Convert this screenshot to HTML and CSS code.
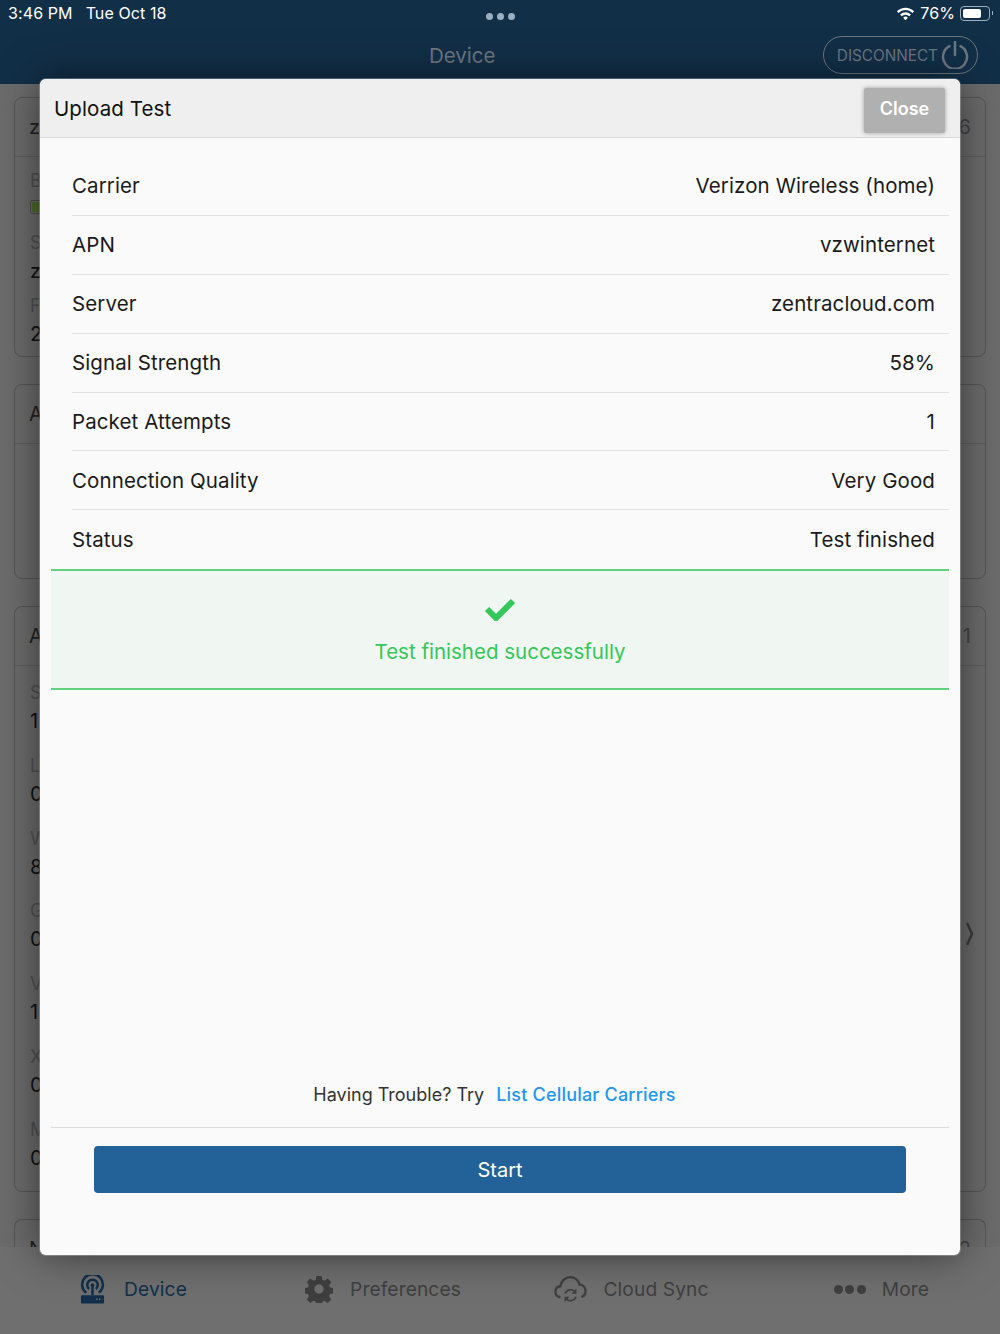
FILE: index.html
```html
<!DOCTYPE html>
<html lang="en">
  <head>
    <meta charset="UTF-8" />
    <meta name="viewport" content="width=device-width, initial-scale=1.0" />
    <title>Upload Test</title>
    <link rel="stylesheet" href="styles.css">
  </head>
  <body>
    <div class="app">
      <!-- Header -->
      <header class="topBar">
        <div class="statusBar">
          <div class="statusLeft">
            <span>3:46 PM</span>
            <span>Tue Oct 18</span>
          </div>
          <div class="statusDots"><i></i><i></i><i></i></div>
          <div class="statusRight">
            <svg class="wifiIcon" viewBox="0 0 20 15">
              <path d="M1 5.2a12.8 12.8 0 0 1 18 0l-1.6 1.7a10.5 10.5 0 0 0-14.8 0z" />
              <path d="M4.3 8.6a8.2 8.2 0 0 1 11.4 0l-1.7 1.7a5.8 5.8 0 0 0-8 0z" />
              <path d="M7.5 11.9a3.6 3.6 0 0 1 5 0L10 14.5z" />
            </svg>
            <span>76%</span>
            <div class="battery"><div class="batteryLevel"></div></div>
            <div class="batteryTip"></div>
          </div>
        </div>
        <div class="navBar">
          <div class="navTitle">Device</div>
          <div class="disconnect">
            <span>DISCONNECT</span>
            <svg class="powerIcon" viewBox="0 0 28 28">
              <path d="M8.5 5.2a12 12 0 1 0 11 0" />
              <path d="M14 1v13" />
            </svg>
          </div>
        </div>
      </header>

      <!-- Cards behind the dialog -->
      <main class="cards">
        <section class="card cardOne">
          <div class="cardHead"><span>z</span><span>6</span></div>
          <div class="cardBody">
            <div class="field">
              <div class="fieldLabel">B</div>
              <div class="batteryBox"><div></div></div>
            </div>
            <div class="field"><div class="fieldLabel">S</div><div class="fieldValue">z</div></div>
            <div class="field"><div class="fieldLabel">F</div><div class="fieldValue">2</div></div>
          </div>
        </section>
        <section class="card cardTwo">
          <div class="cardHead"><span>A</span></div>
        </section>
        <section class="card cardThree">
          <div class="cardHead"><span>A</span><span>1</span></div>
          <div class="cardBody">
            <div class="field"><div class="fieldLabel">S</div><div class="fieldValue">1</div></div>
            <div class="field"><div class="fieldLabel">L</div><div class="fieldValue">0</div></div>
            <div class="field"><div class="fieldLabel">W</div><div class="fieldValue">8</div></div>
            <div class="field"><div class="fieldLabel">G</div><div class="fieldValue">0</div></div>
            <div class="field"><div class="fieldLabel">V</div><div class="fieldValue">1</div></div>
            <div class="field"><div class="fieldLabel">X</div><div class="fieldValue">0</div></div>
            <div class="field"><div class="fieldLabel">M</div><div class="fieldValue">0</div></div>
          </div>
          <svg class="chevron" viewBox="0 0 8 24"><path d="M1 1l5 11-5 11" /></svg>
        </section>
        <section class="card cardFour">
          <div class="cardHead"><span>N</span><span>2</span></div>
        </section>
      </main>

      <!-- Tabs -->
      <nav class="tabBar">
        <div class="tab tabActive">
          <svg class="tabIcon" viewBox="0 0 26 30">
            <path class="tabStroke" d="M6.500 18.500a10.800 10.800 0 1 1 13 0" />
            <path class="tabStroke" d="M9.500 14.500a5.500 5.500 0 1 1 7 0" />
            <circle cx="13" cy="10.500" r="2" />
            <path d="M11.700 11h2.600v10h-2.600z" />
            <path fill-rule="evenodd" d="M2 21h22a1 1 0 0 1 1 1v6.500a1 1 0 0 1-1 1H2a1 1 0 0 1-1-1V22a1 1 0 0 1 1-1zm15.500 3.200a.9.900 0 1 0 0 1.800.9.900 0 0 0 0-1.800zm3 0a.9.900 0 1 0 0 1.800.9.900 0 0 0 0-1.800z" />
          </svg>
          <span>Device</span>
        </div>
        <div class="tab tabGear">
          <svg class="tabIcon gearIcon" viewBox="0 0 30 30">
            <path fill-rule="evenodd" d="M12.300 1h5.400l.8 4.100 2.300 1 3.500-2.300 3.800 3.800-2.300 3.500 1 2.300 4.100.8v5.400l-4.100.8-1 2.300 2.300 3.500-3.800 3.800-3.500-2.300-2.300 1-.8 4.100h-5.400l-.8-4.100-2.300-1-3.500 2.300-3.800-3.800 2.300-3.500-1-2.300-4.100-.8v-5.400l4.100-.8 1-2.300-2.300-3.500 3.800-3.800 3.500 2.300 2.300-1zM15 10a5 5 0 1 0 0 10 5 5 0 0 0 0-10z" />
          </svg>
          <span>Preferences</span>
        </div>
        <div class="tab">
          <svg class="tabIcon cloudIcon" viewBox="0 0 36 30">
            <path class="tabStroke" d="M7 23.500C3.500 23 1.500 20.500 1.500 17.500c0-3.200 2.300-5.600 5.300-6C8 5.500 12.500 1.500 17.500 1.500c5 0 9 3.300 10.300 8 3.800.3 6.700 3.400 6.700 7.200 0 3-1.800 5.500-4.500 6.500" />
            <path class="tabThin" d="M12 19.500a6.500 6.500 0 0 1 11-2" />
            <path d="M24.500 14v5.500h-5.500z" />
            <path class="tabThin" d="M24 23a6.500 6.500 0 0 1-11 2" />
            <path d="M11.500 28.500V23H17z" />
          </svg>
          <span>Cloud Sync</span>
        </div>
        <div class="tab tabMore">
          <div class="moreDots"><i></i><i></i><i></i></div>
          <span>More</span>
        </div>
      </nav>
    </div>

    <!-- Dialog -->
    <div class="modal">
      <div class="modalHead">
        <div class="modalTitle">Upload Test</div>
        <div class="closeBtn">Close</div>
      </div>
      <div class="modalBody">
        <div class="rows">
          <div class="row"><span>Carrier</span><span>Verizon Wireless (home)</span></div>
          <div class="row"><span>APN</span><span>vzwinternet</span></div>
          <div class="row"><span>Server</span><span>zentracloud.com</span></div>
          <div class="row"><span>Signal Strength</span><span>58%</span></div>
          <div class="row"><span>Packet Attempts</span><span>1</span></div>
          <div class="row"><span>Connection Quality</span><span>Very Good</span></div>
          <div class="row"><span>Status</span><span>Test finished</span></div>
        </div>
        <div class="success">
          <svg class="checkIcon" viewBox="0 0 32 24"><path d="M3 12l9 9L29 4" /></svg>
          <div class="successText">Test finished successfully</div>
        </div>
        <div class="trouble">
          <span>Having Trouble? Try</span>
          <span class="troubleLink">List Cellular Carriers</span>
        </div>
        <div class="modalFoot">
          <div class="startBtn">Start</div>
        </div>
      </div>
    </div>
  </body>
</html>
```

FILE: styles.css
```css
body {
  margin: 0;
  padding: 0;
  background: #6b6b6b;
  font-family: "Inter", "Liberation Sans", sans-serif;
  color: #111;
}

.app {
  width: 1000px;
  height: 1334px;
  display: flex;
  flex-direction: column;
  overflow: hidden;
}

/* ===== header ===== */
.topBar {
  height: 84px;
  flex: none;
  background: #122f48;
  display: flex;
  flex-direction: column;
}

.statusBar {
  height: 26px;
  padding: 0 8px;
  display: flex;
  justify-content: space-between;
  align-items: center;
  color: #fff;
  font-size: 16px;
  letter-spacing: 0.1px;
}

.statusLeft {
  display: flex;
  gap: 13px;
  width: 300px;
}

.statusDots {
  display: flex;
  gap: 4px;
  margin-top: 6px;
}

.statusDots i {
  width: 7px;
  height: 7px;
  border-radius: 50%;
  background: #9db0c0;
}

.statusRight {
  width: 300px;
  display: flex;
  justify-content: flex-end;
  align-items: center;
  gap: 5px;
  color: #fff;
}

.wifiIcon {
  width: 19px;
  height: 15px;
  fill: #fff;
}

.battery {
  width: 30px;
  height: 15px;
  box-sizing: border-box;
  border: 1px solid #9db0c0;
  border-radius: 4px;
  padding: 2px;
}

.batteryLevel {
  width: 76%;
  height: 100%;
  background: #fff;
  border-radius: 2px;
}

.batteryTip {
  width: 1px;
  height: 4px;
  background: #9db0c0;
  margin-left: -3px;
  margin-right: -1px;
}

.navBar {
  flex: 1;
  display: flex;
  justify-content: space-between;
  align-items: center;
  padding: 0 22px 0 429px;
}

.navTitle {
  font-size: 20.500px;
  color: #6d7780;
}

.disconnect {
  width: 155px;
  height: 38px;
  box-sizing: border-box;
  border: 1px solid #6d7780;
  border-radius: 19px;
  display: flex;
  align-items: center;
  justify-content: flex-end;
  gap: 3px;
  padding-right: 8px;
  color: #6d7780;
  font-size: 15.300px;
}

.powerIcon {
  width: 28px;
  height: 28px;
  fill: none;
  stroke: #6d7780;
  stroke-width: 2.500;
  stroke-linecap: round;
}

/* ===== cards behind the dialog ===== */
.cards {
  flex: 1;
  min-height: 0;
  padding: 13px 14px 0;
  display: flex;
  flex-direction: column;
  gap: 27px;
}

.card {
  flex: none;
  box-sizing: border-box;
  border: 1px solid #555;
  border-radius: 8px;
  position: relative;
}

.cardOne { height: 260px; }
.cardTwo { height: 195px; }
.cardThree { height: 586px; }
.cardFour { height: 60px; border-bottom: 0; }

.cardHead {
  height: 59px;
  box-sizing: border-box;
  border-bottom: 1px solid #5d5d5d;
  padding: 0 14px;
  display: flex;
  justify-content: space-between;
  align-items: center;
  font-size: 20px;
  color: #222;
}

.cardHead span:nth-child(2) {
  color: #444;
}

.cardBody {
  padding: 15px 15px;
  display: flex;
  flex-direction: column;
  gap: 16.800px;
}

.cardOne .cardBody {
  padding-top: 12px;
  gap: 7px;
}

.fieldLabel {
  font-size: 18px;
  line-height: 24px;
  color: #505050;
}

.fieldValue {
  font-size: 20px;
  line-height: 32px;
  color: #111;
}

.batteryBox {
  width: 40px;
  height: 14px;
  box-sizing: border-box;
  margin: 7px 0 10px;
  border: 1px solid #4b4b4b;
  border-radius: 2px;
  padding: 1px;
}

.batteryBox div {
  width: 100%;
  height: 100%;
  background: #4d6b2b;
}

.chevron {
  position: absolute;
  right: 11px;
  top: 315px;
  width: 8px;
  height: 24px;
  fill: none;
  stroke: #3c3c3c;
  stroke-width: 2.500;
}

/* ===== tabs ===== */
.tabBar {
  position: absolute;
  left: 0;
  top: 1247px;
  width: 1000px;
  height: 87px;
  box-sizing: border-box;
  background: #6f6f6f;
  padding-left: 9px;
  display: flex;
}

.tab {
  flex: none;
  width: 249px;
  height: 84px;
  display: flex;
  justify-content: center;
  align-items: center;
  gap: 16px;
  font-size: 19.200px;
  letter-spacing: 0.1px;
  color: #3f3f3f;
}

.tabActive {
  gap: 19px;
  color: #12304a;
}

.tabGear {
  gap: 17px;
  padding-left: 1px;
  box-sizing: border-box;
}

.tabMore {
  padding-left: 2px;
  box-sizing: border-box;
}

.tabIcon {
  width: 25px;
  height: 29px;
  fill: currentColor;
}

.gearIcon {
  width: 28px;
  height: 28px;
}

.cloudIcon {
  width: 33px;
  height: 29px;
}

.tabStroke {
  fill: none;
  stroke: currentColor;
  stroke-width: 2.600;
}

.tabThin {
  fill: none;
  stroke: currentColor;
  stroke-width: 1.800;
}

.moreDots {
  display: flex;
  gap: 2.500px;
}

.moreDots i {
  width: 9px;
  height: 9px;
  border-radius: 50%;
  background: #3f3f3f;
}

/* ===== dialog ===== */
.modal {
  position: absolute;
  left: 40px;
  top: 79px;
  width: 920px;
  height: 1176px;
  box-sizing: border-box;
  border-radius: 6px;
  background: #fafafa;
  box-shadow: 0 0 0 1px rgba(255, 255, 255, 0.25), 0 0 40px rgba(0, 0, 0, 0.5);
  display: flex;
  flex-direction: column;
  overflow: hidden;
}

.modalHead {
  height: 59px;
  flex: none;
  box-sizing: border-box;
  background: #efefef;
  border-bottom: 1px solid #d6d6d6;
  padding: 1px 15px 0 14px;
  display: flex;
  justify-content: space-between;
  align-items: center;
}

.modalTitle {
  font-size: 20.500px;
  letter-spacing: 0.1px;
  color: #111;
}

.closeBtn {
  width: 81px;
  height: 45px;
  margin-top: 3px;
  padding-bottom: 4px;
  background: #b0b0b0;
  border-radius: 2px;
  box-shadow: 0 0 4px rgba(0, 0, 0, 0.35);
  color: #fff;
  font-size: 18px;
  font-weight: 600;
  display: flex;
  justify-content: center;
  align-items: center;
  box-sizing: border-box;
}

.modalBody {
  flex: 1;
  display: flex;
  flex-direction: column;
  padding: 19px 11px 0;
}

.rows {
  padding-left: 21px;
}

.row {
  height: 58.900px;
  box-sizing: border-box;
  border-bottom: 1.500px solid #e1e1e1;
  padding: 0 14px 0 0;
  display: flex;
  justify-content: space-between;
  align-items: center;
  font-size: 20.500px;
  letter-spacing: 0.1px;
  color: #1a1a1a;
}

.row:last-child {
  border-bottom: 0;
}

.success {
  height: 121px;
  box-sizing: border-box;
  background: #f0f6f2;
  border-top: 2px solid #62d17f;
  border-bottom: 2px solid #62d17f;
  display: flex;
  flex-direction: column;
  align-items: center;
  padding-top: 26px;
  gap: 18px;
  color: #34c759;
  font-size: 20.500px;
}

.checkIcon {
  width: 32px;
  height: 24px;
  flex: none;
  fill: none;
  stroke: #34c759;
  stroke-width: 6;
}

.successText {
  line-height: 26px;
}

.trouble {
  margin-top: auto;
  height: 63px;
  box-sizing: border-box;
  padding: 0 11px 2px 0;
  display: flex;
  justify-content: center;
  align-items: center;
  gap: 12px;
  font-size: 18px;
  color: #333;
}

.troubleLink {
  color: #2196f3;
  font-weight: 500;
  letter-spacing: 0.2px;
}

.modalFoot {
  height: 128px;
  box-sizing: border-box;
  border-top: 1px solid #dcdcdc;
  padding: 18px 43px 0;
}

.startBtn {
  height: 47px;
  background: #236298;
  border-radius: 4px;
  color: #fff;
  font-size: 20px;
  display: flex;
  justify-content: center;
  align-items: center;
}
```
